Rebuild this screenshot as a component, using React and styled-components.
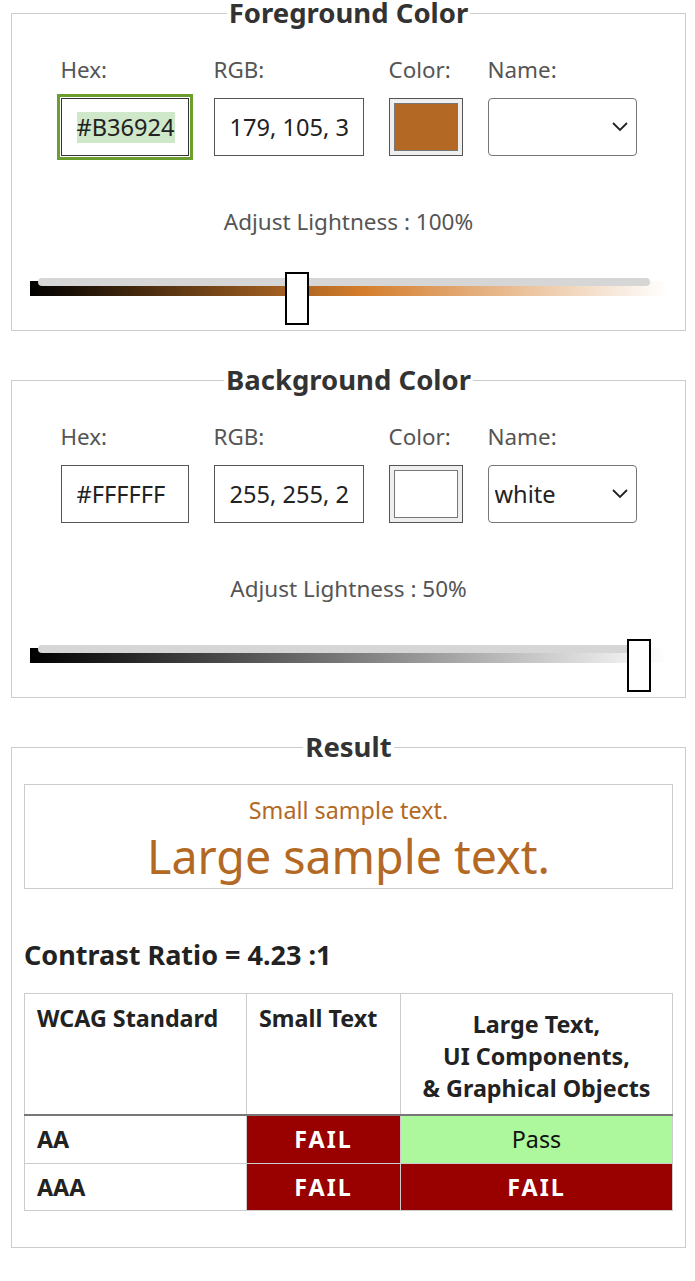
import React from 'react';
import styled, { createGlobalStyle } from 'styled-components';

const GlobalStyle = createGlobalStyle`
  body {
    margin: 0;
    background: #fff;
    font-family: "Noto Sans", "Open Sans", sans-serif;
    color: #222;
  }
`;

const Page = styled.div`
  padding: 0 9px 0 11px;
`;

const Panel = styled.fieldset`
  margin: 0 0 36px;
  padding: 0 12px ${props => props.$bottom || 4}px;
  border: 1px solid #ccc;
  min-width: 0;
`;

const Legend = styled.legend`
  margin: 0 auto;
  padding: 0 2px;
  font-size: 27.5px;
  font-weight: 700;
  line-height: 26px;
  color: #333;
`;

const FieldRow = styled.div`
  display: flex;
  justify-content: center;
  gap: 25px;
  margin-top: 30px;
`;

const Field = styled.div`
  display: flex;
  flex-direction: column;
  width: ${props => props.$w}px;
`;

const Label = styled.label`
  font-size: 22.4px;
  line-height: 28px;
  color: #555;
  margin-bottom: 14px;
`;

const TextBox = styled.input`
  box-sizing: border-box;
  width: 100%;
  height: 58px;
  padding: 0 15px;
  border: 1px solid #555;
  border-radius: 0;
  font-family: inherit;
  font-size: 23.6px;
  color: #222;
  background: #fff;
  outline: none;
`;

const FocusBox = styled.div`
  box-sizing: border-box;
  display: flex;
  align-items: center;
  width: 100%;
  height: 58px;
  padding: 0 15px;
  border: 1px solid #333;
  outline: 3px solid #6c9e2f;
  outline-offset: 1px;
  font-size: 23.6px;
  color: #222;
`;

const Selected = styled.span`
  background: #cfe8c9;
  line-height: 31px;
`;

const Swatch = styled.div`
  box-sizing: border-box;
  height: 58px;
  padding: 4px;
  border: 1px solid #555;
  background: #efefef;
`;

const SwatchFill = styled.div`
  height: 100%;
  box-sizing: border-box;
  border: 1px solid #777;
  background: ${props => props.$color};
`;

const SelectWrap = styled.div`
  position: relative;
  height: 58px;
`;

const Select = styled.select`
  box-sizing: border-box;
  width: 100%;
  height: 58px;
  padding: 0 36px 0 6px;
  border: 1px solid #767676;
  border-radius: 4px;
  background: #fff;
  appearance: none;
  font-family: inherit;
  font-size: 23.6px;
  color: #222;
`;

const Chevron = styled.svg`
  position: absolute;
  right: 8px;
  top: 22px;
  pointer-events: none;
`;

const Caption = styled.div`
  margin-top: 52px;
  text-align: center;
  font-size: 22.5px;
  line-height: 28px;
  color: #555;
`;

const Slider = styled.div`
  position: relative;
  height: 45px;
  padding-top: 9px;
  margin: 36px 6px 0;
`;

const Ramp = styled.div`
  height: 15px;
  background: linear-gradient(to right, #000 0%, ${props => props.$mid} 52%, #fff 100%);
`;

const Track = styled.div`
  position: absolute;
  left: 8px;
  right: 17px;
  top: 6px;
  height: 8px;
  border-radius: 4px;
  background: #d6d6d6;
`;

const Thumb = styled.div`
  position: absolute;
  top: 0;
  box-sizing: border-box;
  width: 24px;
  height: 53px;
  background: #fff;
  border: 2px solid #000;
`;

const Sample = styled.div`
  margin-top: 24px;
  padding: 10px 0 4px;
  border: 1px solid #ccc;
  text-align: center;
  color: #b36924;
`;

const SmallSample = styled.div`
  font-size: 23.3px;
  line-height: 30px;
`;

const LargeSample = styled.div`
  margin-top: 3px;
  font-size: 46.5px;
  line-height: 56px;
`;

const Ratio = styled.h2`
  margin: 50px 0 22px;
  font-size: 27px;
  line-height: 32px;
  font-weight: 700;
  color: #222;
`;

const Table = styled.table`
  width: 100%;
  border-collapse: collapse;
  border: 1px solid #ccc;
  font-size: 23.3px;
  color: #222;
`;

const Head = styled.th`
  height: 121px;
  box-sizing: border-box;
  padding: ${props => (props.$center ? '14px' : '8px')} 12px 8px;
  border: 1px solid #ccc;
  border-bottom: 2px solid #777;
  vertical-align: top;
  text-align: ${props => (props.$center ? 'center' : 'left')};
  font-weight: 700;
  line-height: 32px;
`;

const Level = styled.td`
  height: ${props => props.$h || 46}px;
  padding: 0 12px;
  border: 1px solid #ccc;
  font-weight: 700;
`;

const Verdict = styled.td`
  padding: 0;
  border: 1px solid #ccc;
  text-align: center;
  background: ${props => (props.$pass ? '#adf89c' : '#990000')};
  color: ${props => (props.$pass ? '#111' : '#fff')};
  font-weight: ${props => (props.$pass ? 400 : 700)};
  letter-spacing: ${props => (props.$pass ? 0 : 2)}px;
`;

const ColorPanel = ({ title, hex, rgb, color, name, lightness, position, mid, focused }) => (
  <Panel>
    <Legend>{title}</Legend>
    <FieldRow>
      <Field $w={128}>
        <Label>Hex:</Label>
        {focused ? (
          <FocusBox>
            <Selected>{hex}</Selected>
          </FocusBox>
        ) : (
          <TextBox defaultValue={hex} />
        )}
      </Field>
      <Field $w={150}>
        <Label>RGB:</Label>
        <TextBox defaultValue={rgb} />
      </Field>
      <Field $w={74}>
        <Label>Color:</Label>
        <Swatch>
          <SwatchFill $color={color} />
        </Swatch>
      </Field>
      <Field $w={149}>
        <Label>Name:</Label>
        <SelectWrap>
          <Select defaultValue={name}>
            <option value=""></option>
            <option value="white">white</option>
          </Select>
          <Chevron width="18" height="12" viewBox="0 0 18 12">
            <path d="M2 3 L9 10 L16 3" fill="none" stroke="#222" strokeWidth="1.8" />
          </Chevron>
        </SelectWrap>
      </Field>
    </FieldRow>
    <Caption>Adjust Lightness : {lightness}</Caption>
    <Slider>
      <Ramp $mid={mid} />
      <Track />
      <Thumb style={{ left: 8 + position * 589 }} />
    </Slider>
  </Panel>
);

const App = () => (
  <Page>
    <GlobalStyle />
    <ColorPanel
      title="Foreground Color"
      hex="#B36924"
      rgb="179, 105, 36"
      color="#b36924"
      name=""
      lightness="100%"
      position={0.42}
      mid="hsl(29, 66%, 50%)"
      focused
    />
    <ColorPanel
      title="Background Color"
      hex="#FFFFFF"
      rgb="255, 255, 255"
      color="#ffffff"
      name="white"
      lightness="50%"
      position={1}
      mid="hsl(0, 0%, 50%)"
    />
    <Panel $bottom={36}>
      <Legend>Result</Legend>
      <Sample>
        <SmallSample>Small sample text.</SmallSample>
        <LargeSample>Large sample text.</LargeSample>
      </Sample>
      <Ratio>Contrast Ratio = 4.23 :1</Ratio>
      <Table>
        <colgroup>
          <col style={{ width: 222 }} />
          <col style={{ width: 154 }} />
          <col />
        </colgroup>
        <thead>
          <tr>
            <Head>WCAG Standard</Head>
            <Head>Small Text</Head>
            <Head $center>
              Large Text,
              <br />
              UI Components,
              <br />& Graphical Objects
            </Head>
          </tr>
        </thead>
        <tbody>
          <tr>
            <Level $h={47}>AA</Level>
            <Verdict>FAIL</Verdict>
            <Verdict $pass>Pass</Verdict>
          </tr>
          <tr>
            <Level>AAA</Level>
            <Verdict>FAIL</Verdict>
            <Verdict>FAIL</Verdict>
          </tr>
        </tbody>
      </Table>
    </Panel>
  </Page>
);

export default App;
